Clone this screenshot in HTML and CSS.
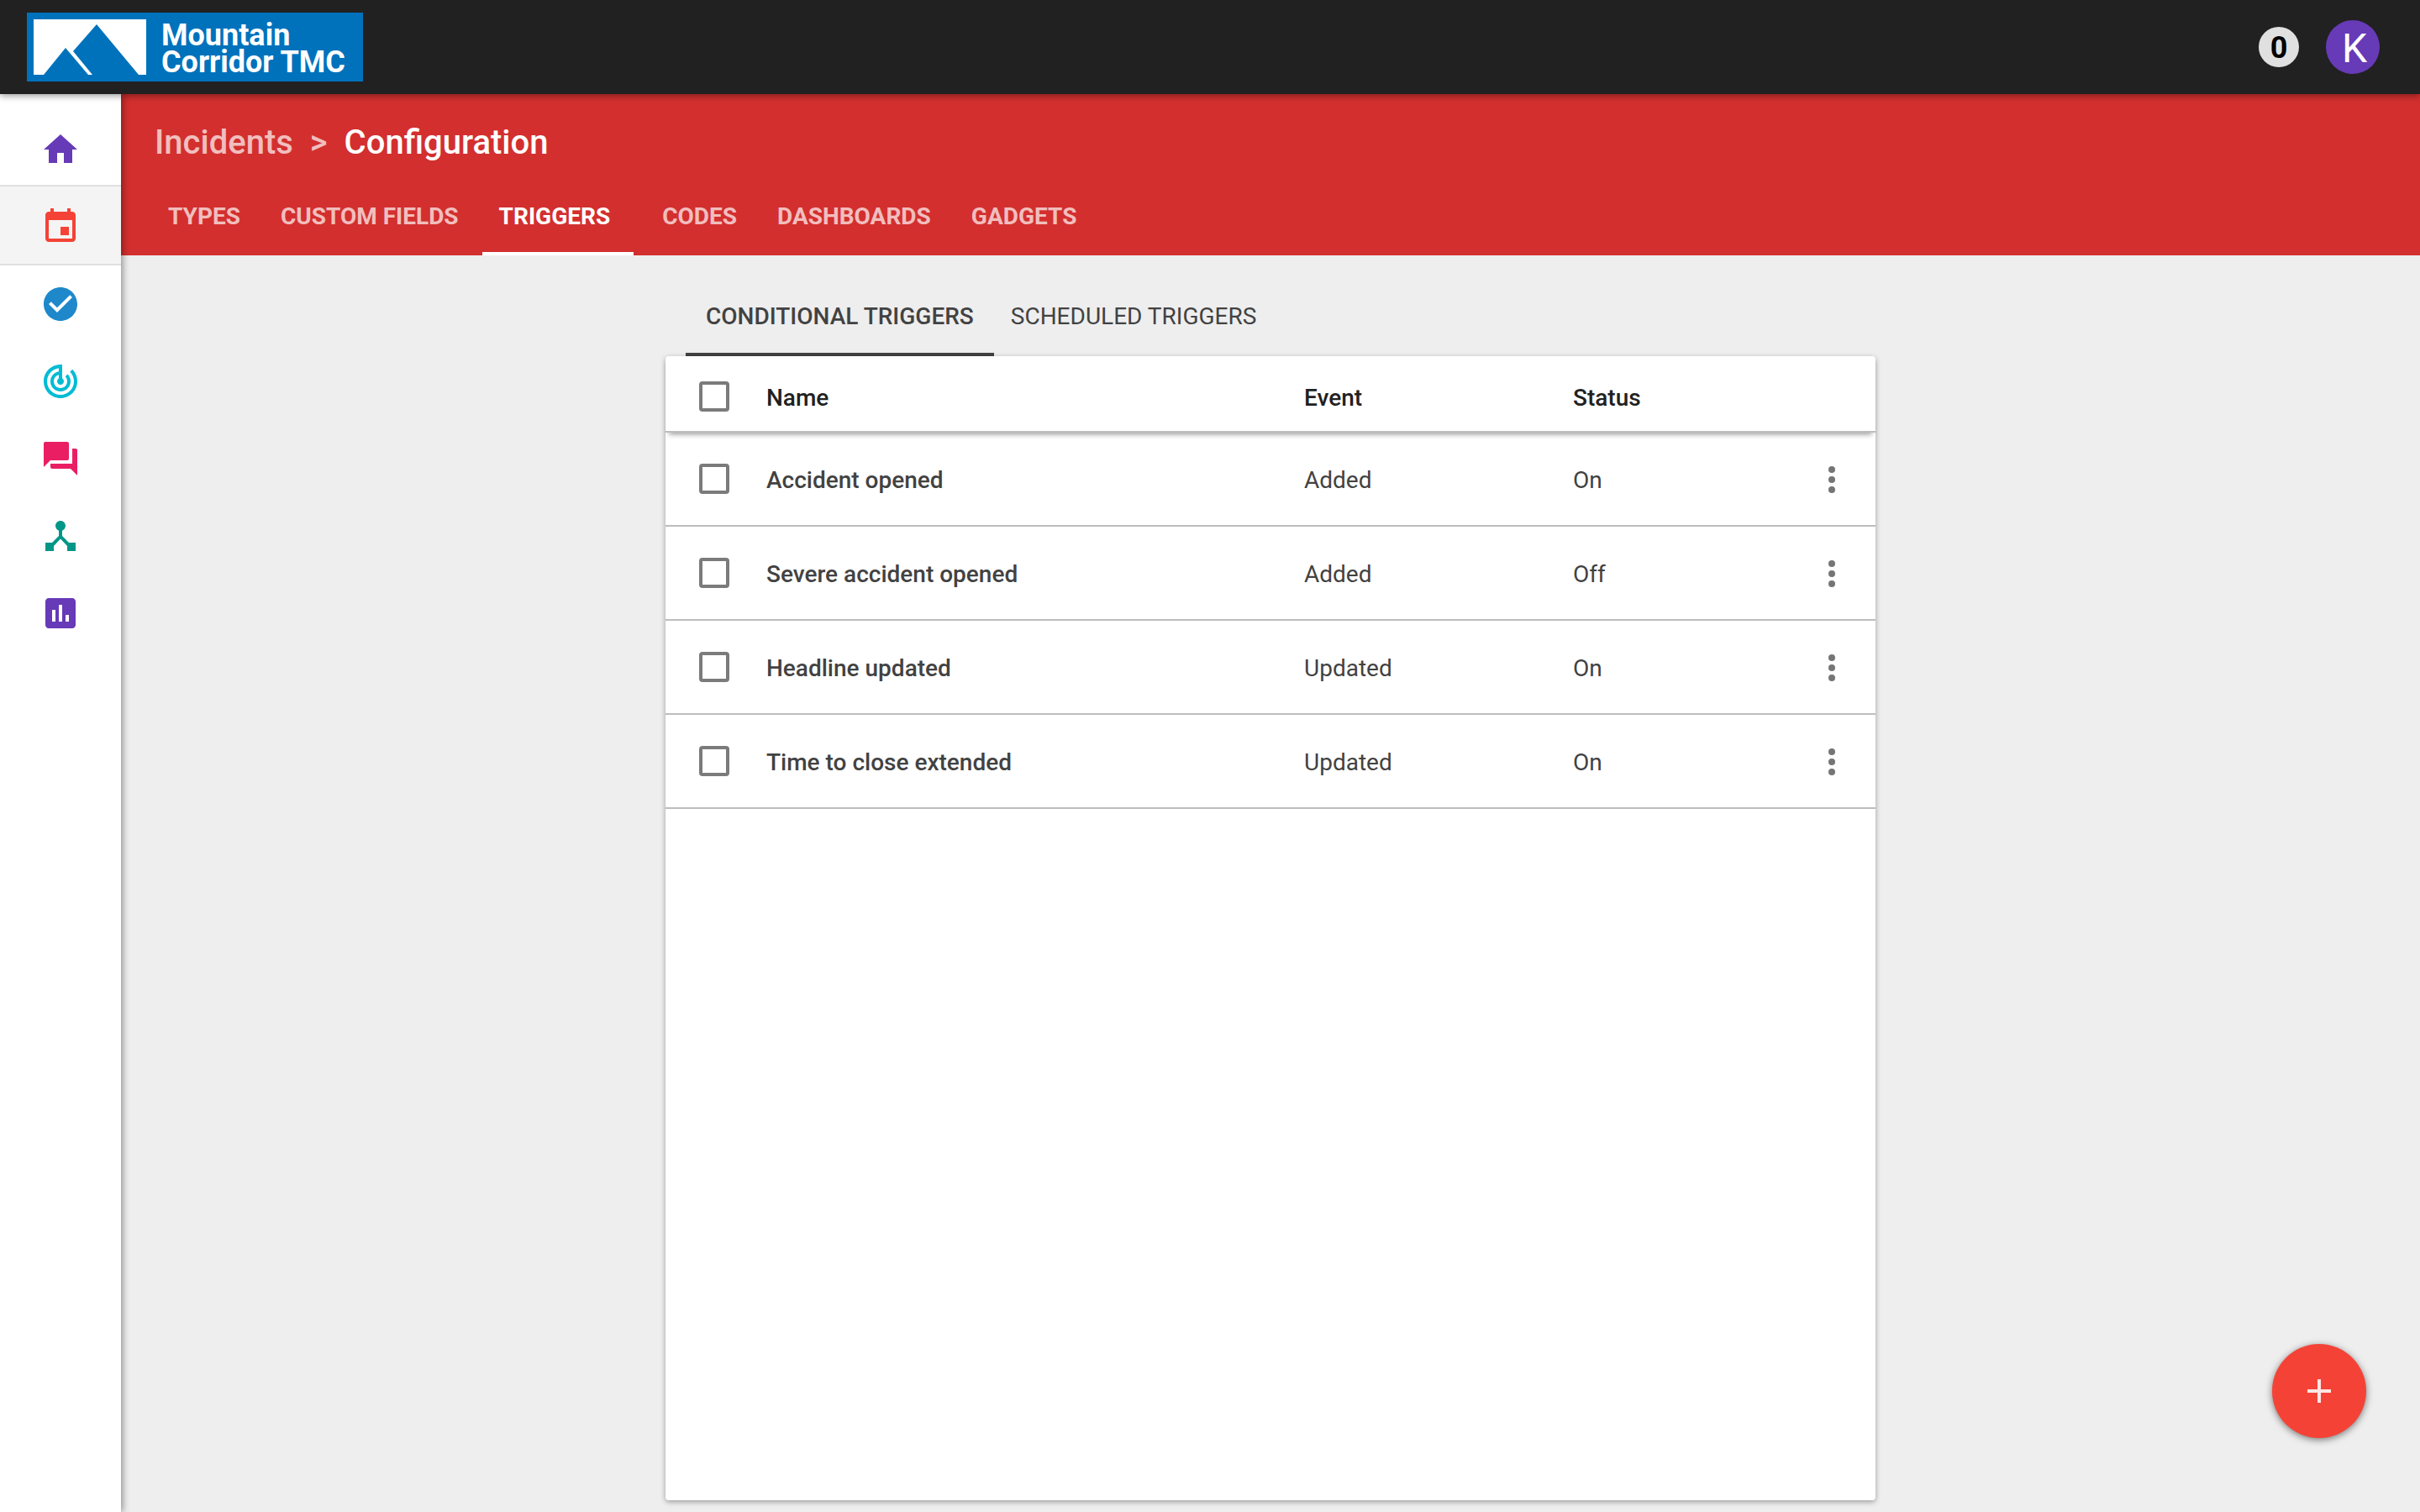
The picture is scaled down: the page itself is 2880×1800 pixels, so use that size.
FILE: index.html
```html
<!DOCTYPE html>
<html lang="en">
<head>
<meta charset="utf-8">
<title>Incidents – Configuration</title>
<link rel="stylesheet" href="styles.css">
</head>
<body>
<header class="topbar">
  <a class="brand" href="#">
    <svg class="brand-mark" viewBox="0 0 134 66" aria-hidden="true"><path fill="#fff" d="M0 0h134v66H0z"/><path fill="#0072bc" d="M12 66L38 34l27 32zM47 38L75 6l50 60H70z"/></svg>
    <span class="brand-name">Mountain<br>Corridor TMC</span>
  </a>
  <div class="account">
    <button class="badge" type="button" aria-label="Notifications">0</button>
    <button class="avatar" type="button" aria-label="Account">K</button>
  </div>
</header>
<div class="shell">
  <nav class="rail" aria-label="Applications">
    <a class="rail-item home" href="#" aria-label="Home"><svg class="icon" viewBox="0 0 24 24"><path d="M10 20v-6h4v6h5v-8h3L12 3 2 12h3v8z"/></svg></a>
    <a class="rail-item incidents" href="#" aria-label="Incidents" aria-current="page"><svg class="icon" viewBox="0 0 24 24"><path d="M17 12h-5v5h5v-5zM16 1v2H8V1H6v2H5c-1.110 0-1.990.9-1.990 2L3 19c0 1.100.89 2 2 2h14c1.100 0 2-.9 2-2V5c0-1.100-.9-2-2-2h-1V1h-2zm3 18H5V8h14v11z"/></svg></a>
    <a class="rail-item tasks" href="#" aria-label="Tasks"><svg class="icon" viewBox="0 0 24 24"><path d="M12 2C6.480 2 2 6.480 2 12s4.480 10 10 10 10-4.480 10-10S17.520 2 12 2zm-2 15l-5-5 1.410-1.410L10 14.170l7.590-7.590L19 8l-9 9z"/></svg></a>
    <a class="rail-item tracking" href="#" aria-label="Tracking"><svg class="icon" viewBox="0 0 24 24"><path d="M19.070 4.930l-1.410 1.410C19.100 7.790 20 9.790 20 12c0 4.420-3.580 8-8 8s-8-3.580-8-8c0-4.080 3.050-7.440 7-7.930v2.020C8.160 6.570 6 9.030 6 12c0 3.310 2.690 6 6 6s6-2.690 6-6c0-1.660-.67-3.160-1.760-4.240l-1.410 1.410C15.550 9.900 16 10.900 16 12c0 2.210-1.790 4-4 4s-4-1.790-4-4c0-1.860 1.280-3.410 3-3.860v2.140c-.6.350-1 .98-1 1.720 0 1.100.9 2 2 2s2-.9 2-2c0-.74-.4-1.380-1-1.720V2h-1C6.480 2 2 6.480 2 12s4.480 10 10 10 10-4.480 10-10c0-2.760-1.120-5.260-2.930-7.070z"/></svg></a>
    <a class="rail-item chat" href="#" aria-label="Messages"><svg class="icon" viewBox="0 0 24 24"><path d="M21 6h-2v9H6v2c0 .55.450 1 1 1h11l4 4V7c0-.55-.45-1-1-1zm-4 6V3c0-.55-.45-1-1-1H3c-.55 0-1 .45-1 1v14l4-4h10c.55 0 1-.45 1-1z"/></svg></a>
    <a class="rail-item network" href="#" aria-label="Network"><svg class="icon" viewBox="0 0 24 24"><path d="M17 16l-4-4V8.820C14.160 8.400 15 7.300 15 6c0-1.660-1.340-3-3-3S9 4.340 9 6c0 1.300.84 2.400 2 2.820V12l-4 4H3v5h5v-3.050l4-4.200 4 4.200V21h5v-5h-4z"/></svg></a>
    <a class="rail-item reports" href="#" aria-label="Reports"><svg class="icon" viewBox="0 0 24 24"><path d="M19 3H5c-1.100 0-2 .9-2 2v14c0 1.100.9 2 2 2h14c1.100 0 2-.9 2-2V5c0-1.100-.9-2-2-2zM9 17H7v-7h2v7zm4 0h-2V7h2v10zm4 0h-2v-4h2v4z"/></svg></a>
  </nav>
  <main class="page">
    <div class="page-head">
      <h1 class="crumbs"><a class="crumb-link" href="#">Incidents</a><span class="crumb-sep">&gt;</span><span>Configuration</span></h1>
      <nav class="tabs" aria-label="Configuration sections">
        <a class="tab" href="#">TYPES</a>
        <a class="tab" href="#">CUSTOM FIELDS</a>
        <a class="tab tab-active" href="#" aria-current="page">TRIGGERS</a>
        <a class="tab" href="#">CODES</a>
        <a class="tab" href="#">DASHBOARDS</a>
        <a class="tab" href="#">GADGETS</a>
      </nav>
    </div>
    <div class="content">
      <nav class="subtabs" aria-label="Trigger kinds">
        <a class="subtab subtab-active" href="#" aria-current="page">CONDITIONAL TRIGGERS</a>
        <a class="subtab" href="#">SCHEDULED TRIGGERS</a>
      </nav>
      <section class="card">
        <table class="triggers">
          <colgroup><col class="col-check"><col class="col-name"><col class="col-event"><col class="col-status"><col class="col-menu"></colgroup>
          <thead>
            <tr><th class="cell-check"><input class="check" type="checkbox" aria-label="Select all"></th><th>Name</th><th>Event</th><th>Status</th><td></td></tr>
          </thead>
          <tbody>
            <tr><td class="cell-check"><input class="check" type="checkbox" id="t1"></td><td class="name"><label for="t1">Accident opened</label></td><td>Added</td><td>On</td><td class="cell-menu"><button class="more" type="button" aria-label="More actions"><svg class="icon" viewBox="0 0 24 24"><circle cx="12" cy="6" r="2"/><circle cx="12" cy="12" r="2"/><circle cx="12" cy="18" r="2"/></svg></button></td></tr>
            <tr><td class="cell-check"><input class="check" type="checkbox" id="t2"></td><td class="name"><label for="t2">Severe accident opened</label></td><td>Added</td><td>Off</td><td class="cell-menu"><button class="more" type="button" aria-label="More actions"><svg class="icon" viewBox="0 0 24 24"><circle cx="12" cy="6" r="2"/><circle cx="12" cy="12" r="2"/><circle cx="12" cy="18" r="2"/></svg></button></td></tr>
            <tr><td class="cell-check"><input class="check" type="checkbox" id="t3"></td><td class="name"><label for="t3">Headline updated</label></td><td>Updated</td><td>On</td><td class="cell-menu"><button class="more" type="button" aria-label="More actions"><svg class="icon" viewBox="0 0 24 24"><circle cx="12" cy="6" r="2"/><circle cx="12" cy="12" r="2"/><circle cx="12" cy="18" r="2"/></svg></button></td></tr>
            <tr><td class="cell-check"><input class="check" type="checkbox" id="t4"></td><td class="name"><label for="t4">Time to close extended</label></td><td>Updated</td><td>On</td><td class="cell-menu"><button class="more" type="button" aria-label="More actions"><svg class="icon" viewBox="0 0 24 24"><circle cx="12" cy="6" r="2"/><circle cx="12" cy="12" r="2"/><circle cx="12" cy="18" r="2"/></svg></button></td></tr>
          </tbody>
        </table>
      </section>
    </div>
  </main>
</div>
<button class="fab" type="button" aria-label="Add trigger"><svg class="icon" viewBox="0 0 24 24"><path d="M19 13h-6v6h-2v-6H5v-2h6V5h2v6h6v2z"/></svg></button>
</body>
</html>
```
FILE: styles.css
```css
* { box-sizing: border-box; }

body {
  margin: 0;
  min-height: 100vh;
  display: flex;
  flex-direction: column;
  background: #eee;
  color: #424242;
  font: 400 28px/40px Roboto, "Noto Sans", sans-serif;
}

a { color: inherit; text-decoration: none; }
button { padding: 0; border: 0; font: inherit; cursor: pointer; }
.icon { display: block; width: 48px; height: 48px; fill: currentColor; }

/* Top bar */
.topbar {
  position: relative;
  z-index: 3;
  display: flex;
  align-items: center;
  justify-content: space-between;
  height: 112px;
  padding: 0 48px 0 32px;
  background: #212121;
  box-shadow: 0 2px 8px rgba(0, 0, 0, .4);
}
.brand {
  display: flex;
  align-items: center;
  gap: 18px;
  width: 400px;
  height: 82px;
  padding-left: 8px;
  background: #0072bc;
  color: #fff;
  font-size: 36px;
  font-weight: 700;
  line-height: 32px;
  white-space: nowrap;
}
.brand-mark { display: block; width: 134px; height: 66px; }
.brand-name { padding-top: 4px; }
.account { display: flex; align-items: center; gap: 32px; }
.badge, .avatar { border-radius: 50%; text-align: center; }
.badge {
  width: 48px;
  height: 48px;
  padding-top: 2px;
  background: #e0e0e0;
  color: #000;
  font-size: 36px;
  font-weight: 700;
  line-height: 46px;
}
.avatar {
  width: 64px;
  height: 64px;
  padding: 4px 0 0 4px;
  background: #673ab7;
  color: #fff;
  font-size: 48px;
  line-height: 60px;
}

.shell { display: flex; flex: 1; }

/* Application rail */
.rail {
  position: relative;
  z-index: 2;
  flex: none;
  width: 144px;
  padding-top: 20px;
  background: #fff;
  box-shadow: 2px 0 8px rgba(0, 0, 0, .4);
}
.rail-item { display: flex; align-items: center; justify-content: center; height: 92px; }
.home, .reports { color: #673ab7; }
.incidents {
  height: 96px;
  margin-top: -4px;
  padding-top: 4px;
  border: solid #e0e0e0;
  border-width: 2px 0;
  background: #f4f4f4;
  color: #f44336;
}
.tasks { color: #1e88cb; }
.tracking { color: #00bcd4; }
.chat { color: #e91e63; }
.network { color: #009688; }

/* Page heading */
.page { display: flex; flex: 1; flex-direction: column; min-width: 0; }
.page-head {
  display: flex;
  flex-direction: column;
  justify-content: space-between;
  height: 192px;
  padding: 34px 32px 0;
  background: #d32f2f;
  color: #fff;
}
.crumbs {
  display: flex;
  gap: 20px;
  margin: 0;
  padding-left: 8px;
  font-size: 40px;
  font-weight: 500;
  line-height: 48px;
}
.crumb-link, .crumb-sep { color: rgba(255, 255, 255, .7); }
.tabs { display: flex; }
.tab {
  padding: 24px 24px 18px;
  border-bottom: 4px solid transparent;
  color: rgba(255, 255, 255, .7);
  font-weight: 700;
  line-height: 48px;
}
.tab-active {
  margin: 0 10px 0 4px;
  padding-right: 28px;
  padding-left: 20px;
  border-color: #fff;
  color: #fff;
}

/* Trigger list */
.content {
  display: flex;
  flex: 1;
  flex-direction: column;
  width: 1440px;
  max-width: 100%;
  margin: 0 auto;
  padding: 40px 0 14px;
}
.subtabs { display: flex; padding-left: 24px; }
.subtab {
  padding: 13px 20px 23px;
  border-bottom: 4px solid transparent;
}
.subtab-active {
  padding-right: 24px;
  padding-left: 24px;
  border-color: #424242;
  font-weight: 500;
}
.card {
  flex: 1;
  border-radius: 4px;
  background: #fff;
  box-shadow: 0 2px 6px rgba(0, 0, 0, .35);
}
.triggers { width: 100%; border-collapse: separate; border-spacing: 0; table-layout: fixed; }
.col-check { width: 120px; }
.col-name { width: 640px; }
.col-event { width: 320px; }
.col-status { width: 256px; }
.triggers th, .triggers td {
  height: 112px;
  padding: 4px 0 0;
  border-bottom: 2px solid #bdbdbd;
  text-align: left;
  vertical-align: middle;
}
.triggers thead th, .triggers thead td { height: 91px; padding-top: 10px; }
.triggers th { color: #212121; font-weight: 500; }
.triggers thead { box-shadow: 0 6px 6px -4px rgba(0, 0, 0, .4); }
.triggers .name { font-weight: 500; }
.triggers .cell-check { padding: 0 0 0 40px; }
.triggers thead .cell-check { padding-top: 6px; }
.triggers .cell-menu { padding: 2px 28px 0 0; }
.check {
  display: block;
  width: 36px;
  height: 36px;
  margin: 0;
  appearance: none;
  border: 4px solid #7b7b7b;
  border-radius: 4px;
}
.check:checked { background: #7b7b7b; }
.more { display: block; margin-left: auto; background: none; color: #757575; }

.fab {
  position: fixed;
  right: 64px;
  bottom: 88px;
  z-index: 4;
  display: grid;
  place-items: center;
  width: 112px;
  height: 112px;
  border-radius: 50%;
  background: #f44336;
  color: rgba(255, 255, 255, .87);
  box-shadow: 0 2px 8px rgba(0, 0, 0, .5);
}
```
